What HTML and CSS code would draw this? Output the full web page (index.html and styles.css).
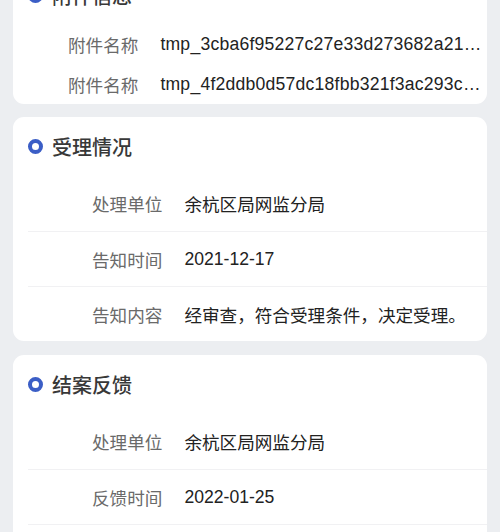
FILE: index.html
```html
<!DOCTYPE html>
<html lang="zh-CN">
<head>
<meta charset="utf-8">
<link rel="stylesheet" href="styles.css">
</head>
<body>
<div class="page">
  <section class="card card-attach">
    <div class="card-head"><span class="dot"></span><span class="title">附件信息</span></div>
    <div class="row row-plain"><span class="label">附件名称</span><span class="value ellipsis">tmp_3cba6f95227c27e33d273682a21a8f4c2e7b.jpg</span></div>
    <div class="row row-plain"><span class="label">附件名称</span><span class="value ellipsis">tmp_4f2ddb0d57dc18fbb321f3ac293c7e1d90a4.jpg</span></div>
  </section>
  <section class="card card-accept">
    <div class="card-head"><span class="dot"></span><span class="title">受理情况</span></div>
    <div class="row"><span class="label">处理单位</span><span class="value">余杭区局网监分局</span></div>
    <div class="row"><span class="label">告知时间</span><span class="value">2021-12-17</span></div>
    <div class="row"><span class="label">告知内容</span><span class="value">经审查，符合受理条件，决定受理。</span></div>
  </section>
  <section class="card">
    <div class="card-head"><span class="dot"></span><span class="title">结案反馈</span></div>
    <div class="row"><span class="label">处理单位</span><span class="value">余杭区局网监分局</span></div>
    <div class="row"><span class="label">反馈时间</span><span class="value">2022-01-25</span></div>
    <div class="row"><span class="label">反馈内容</span><span class="value">已处理完毕。</span></div>
  </section>
</div>
</body>
</html>
```
FILE: styles.css
```css
html, body {
  margin: 0;
  padding: 0;
  background: #eceef1;
  font-family: "Liberation Sans", "Noto Sans CJK SC", sans-serif;
}
.page {
  display: flex;
  flex-direction: column;
  gap: 13px;
  padding: 0 13px;
  margin-top: -34px;
}
.card {
  background: #ffffff;
  border-radius: 11px;
  overflow: hidden;
}
.card-accept {
  margin-bottom: 1px;
}
.card-head {
  height: 59px;
  display: flex;
  align-items: center;
  padding-left: 15px;
}
.dot {
  width: 15px;
  height: 15px;
  box-sizing: border-box;
  border: 4px solid #3b5ec6;
  border-radius: 50%;
  margin-right: 9px;
  flex: none;
}
.title {
  font-size: 20px;
  color: #383838;
  font-weight: 500;
}
.row {
  height: 55px;
  margin-left: 15px;
  padding-left: 64px;
  display: flex;
  align-items: center;
  font-size: 17.6px;
  border-top: 1px solid #f1f1f3;
  box-sizing: border-box;
}
.card-head + .row {
  border-top: none;
}
.card-attach .row {
  height: 39.5px;
  padding-left: 40px;
  padding-right: 2px;
  border-top: none;
}
.label {
  flex: none;
  color: #6a6a6a;
  margin-right: 22px;
}
.value {
  color: #222222;
  min-width: 0;
}
.ellipsis {
  white-space: nowrap;
  overflow: hidden;
  text-overflow: ellipsis;
  letter-spacing: 0.22px;
}
```
